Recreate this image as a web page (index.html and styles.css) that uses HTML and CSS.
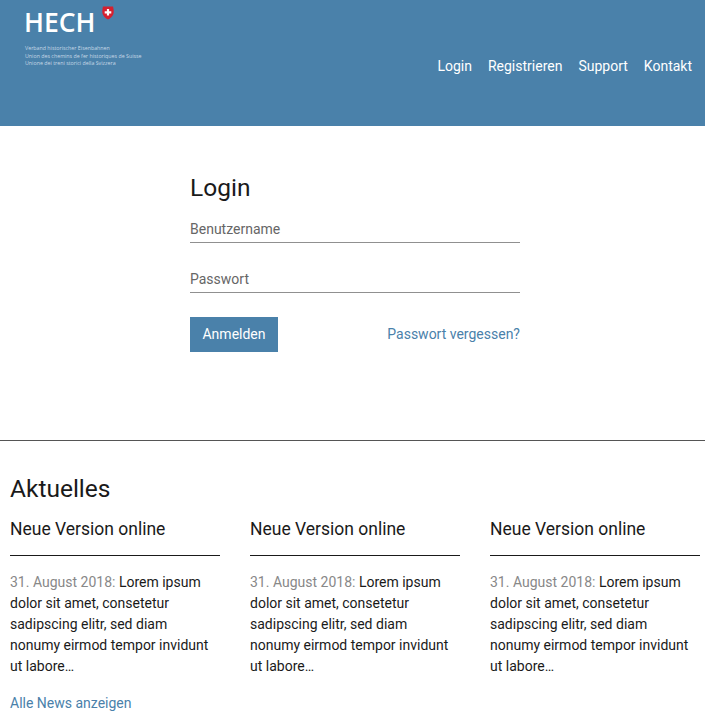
FILE: index.html
```html
<!DOCTYPE html>
<html lang="de">
<head>
<meta charset="utf-8">
<title>HECH Login</title>
<link rel="stylesheet" href="styles.css">
</head>
<body>
<header class="site-header">
  <a class="logo" href="#">
    <div class="logo-mark">
      <span class="logo-word">HECH</span>
      <svg class="logo-shield" width="12" height="14" viewBox="0 0 12 14" aria-hidden="true">
        <path d="M1 0.5H11C11.6 3 12 5 11.5 7.5C11 10 8.5 12.5 6 13.5C3.5 12.5 1 10 0.5 7.5C0 5 0.4 3 1 0.5Z" fill="#d5202f"/>
        <path d="M4.9 3H7.1V5.2H9.3V7.4H7.1V9.6H4.9V7.4H2.7V5.2H4.9Z" fill="#fff"/>
      </svg>
    </div>
    <div class="logo-lines">
      <div>Verband historischer Eisenbahnen</div>
      <div>Union des chemins de fer historiques de Suisse</div>
      <div>Unione dei treni storici della Svizzera</div>
    </div>
  </a>
  <nav class="main-nav">
    <a href="#">Login</a>
    <a href="#">Registrieren</a>
    <a href="#">Support</a>
    <a href="#">Kontakt</a>
  </nav>
</header>

<main>
  <section class="login">
    <h1 class="title">Login</h1>
    <form class="login-form">
      <div class="field">Benutzername</div>
      <div class="field">Passwort</div>
      <div class="actions">
        <button class="btn" type="button">Anmelden</button>
        <a class="link forgot" href="#">Passwort vergessen?</a>
      </div>
    </form>
  </section>

  <section class="news">
    <h2 class="title">Aktuelles</h2>
    <div class="news-grid">
      <article class="news-item">
        <h3>Neue Version online</h3>
        <p><span class="date">31. August 2018:</span> Lorem ipsum dolor sit amet, consetetur sadipscing elitr, sed diam nonumy eirmod tempor invidunt ut labore…</p>
      </article>
      <article class="news-item">
        <h3>Neue Version online</h3>
        <p><span class="date">31. August 2018:</span> Lorem ipsum dolor sit amet, consetetur sadipscing elitr, sed diam nonumy eirmod tempor invidunt ut labore…</p>
      </article>
      <article class="news-item">
        <h3>Neue Version online</h3>
        <p><span class="date">31. August 2018:</span> Lorem ipsum dolor sit amet, consetetur sadipscing elitr, sed diam nonumy eirmod tempor invidunt ut labore…</p>
      </article>
    </div>
    <a class="link all-news" href="#">Alle News anzeigen</a>
  </section>
</main>
</body>
</html>
```
FILE: styles.css
```css
* { box-sizing: border-box; }
html, body { margin: 0; padding: 0; }
body {
  font-family: Roboto, "Liberation Sans", sans-serif;
  font-size: 14px;
  color: #1a1a1a;
  background: #fff;
  overflow: hidden;
}
a { text-decoration: none; }

.site-header {
  height: 126px;
  background: #4a81aa;
  display: flex;
  justify-content: space-between;
  align-items: flex-start;
  padding: 0 13px 0 25px;
}
.logo { display: block; color: #fff; }
.logo-mark { display: flex; align-items: flex-start; height: 45px; }
.logo-word {
  font-family: "Open Sans", sans-serif;
  font-size: 26.5px;
  font-weight: 600;
  line-height: 26px;
  margin: 9px 0 0 -1px;
  color: #fff;
}
.logo-shield { margin: 6px 0 0 7px; }
.logo-lines {
  font-family: "Open Sans", sans-serif;
  font-size: 5.3px;
  line-height: 7.7px;
  color: #c6d8e6;
  white-space: nowrap;
}
.main-nav { display: flex; gap: 16px; margin-top: 57px; }
.main-nav a { color: #fff; font-size: 14px; line-height: 18px; }

.title {
  font-size: 24.5px;
  font-weight: 400;
  line-height: 30px;
  margin: 0;
  color: #1a1a1a;
}

.login {
  width: 330px;
  margin-left: 190px;
  padding-top: 47px;
  height: 314px;
}
.login-form { margin-top: 11px; }
.field {
  height: 29px;
  padding-top: 2px;
  line-height: 26px;
  color: #666;
  font-size: 14px;
  border-bottom: 1px solid #909090;
  margin-bottom: 21px;
}
.actions {
  display: flex;
  justify-content: space-between;
  align-items: center;
  margin-top: 24px;
}
.btn {
  width: 88px;
  height: 35px;
  border: 0;
  padding: 0 0 1px;
  background: #4a81aa;
  color: #fff;
  font: inherit;
}
.link { color: #4a81aa; }
.forgot { margin-bottom: 1px; }

.news {
  border-top: 1px solid #555;
  padding: 33px 5px 0 10px;
}
.news-grid {
  display: grid;
  grid-template-columns: repeat(3, 210px);
  column-gap: 30px;
  margin-top: 13px;
}
.news-item h3 {
  font-size: 17.5px;
  font-weight: 400;
  line-height: 24px;
  margin: 0;
  padding-bottom: 14px;
  border-bottom: 1px solid #1a1a1a;
}
.news-item p {
  font-size: 14px;
  line-height: 21px;
  margin: 16px 0 0;
}
.date { color: #888; }
.all-news { display: block; margin-top: 16px; line-height: 21px; }
```
